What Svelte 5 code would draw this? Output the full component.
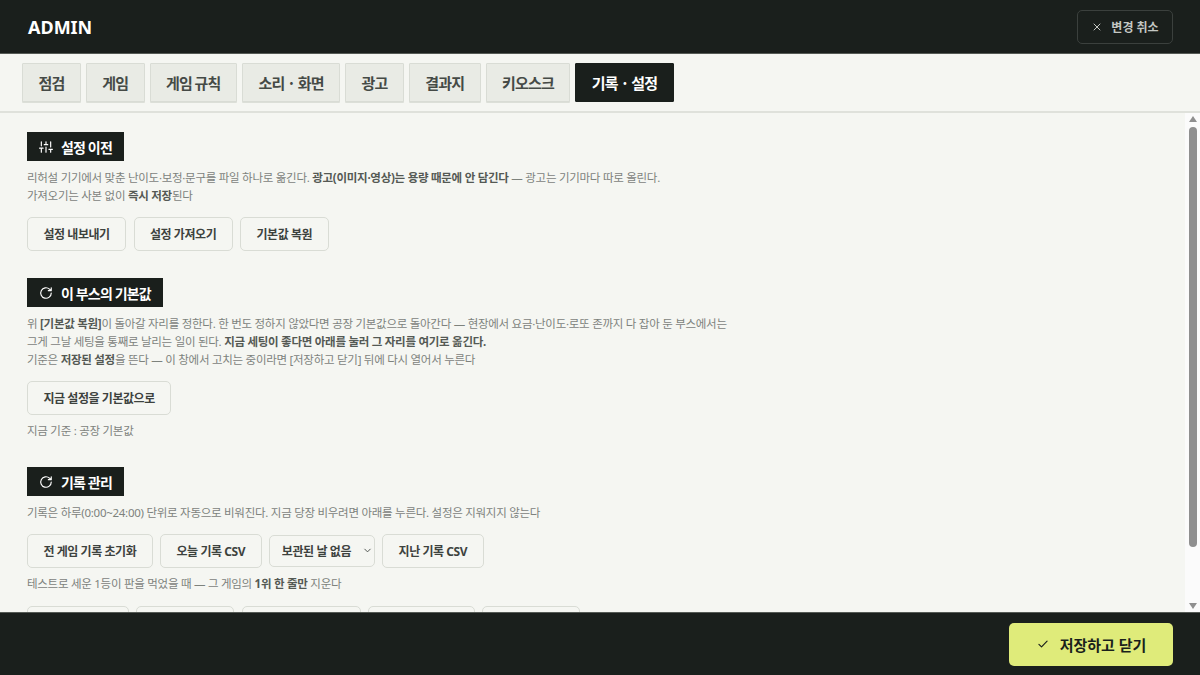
<script>
  const tabs = ["점검", "게임", "게임 규칙", "소리 · 화면", "광고", "결과지", "키오스크", "기록 · 설정"];
  const activeTab = "기록 · 설정";
  const hiddenButtons = [102, 98, 119, 107, 98];
</script>

<div class="admin">
  <header class="top">
    <h1>ADMIN</h1>
    <button class="cancel">
      <svg viewBox="0 0 24 24" class="ico-sm"><path d="M6 6l12 12M18 6L6 18" /></svg>
      변경 취소
    </button>
  </header>

  <nav class="tabs">
    {#each tabs as tab}
      <button class="tab" class:active={tab === activeTab}>{tab}</button>
    {/each}
  </nav>

  <div class="body">
    <main class="content">
      <section>
        <h2>
          <svg viewBox="0 0 24 24" class="ico">
            <path d="M4 21v-7M4 10V3M12 21v-9M12 8V3M20 21v-5M20 12V3M1 14h6M9 8h6M17 16h6" />
          </svg>
          설정 이전
        </h2>
        <p>
          리허설 기기에서 맞춘 난이도·보정·문구를 파일 하나로 옮긴다. <b>광고(이미지·영상)는 용량 때문에 안 담긴다</b> — 광고는 기기마다 따로 올린다.<br />
          가져오기는 사본 없이 <b>즉시 저장</b>된다
        </p>
        <div class="row">
          <button class="btn">설정 내보내기</button>
          <button class="btn">설정 가져오기</button>
          <button class="btn">기본값 복원</button>
        </div>
      </section>

      <section>
        <h2>
          <svg viewBox="0 0 24 24" class="ico">
            <path d="M21 12a9 9 0 1 1-3-6.7L21 8M21 3v5h-5" />
          </svg>
          이 부스의 기본값
        </h2>
        <p>
          위 <b>[기본값 복원]</b>이 돌아갈 자리를 정한다. 한 번도 정하지 않았다면 공장 기본값으로 돌아간다 — 현장에서 요금·난이도·로또 존까지 다 잡아 둔 부스에서는<br />
          그게 그날 세팅을 통째로 날리는 일이 된다. <b>지금 세팅이 좋다면 아래를 눌러 그 자리를 여기로 옮긴다.</b><br />
          기준은 <b>저장된 설정</b>을 뜬다 — 이 창에서 고치는 중이라면 [저장하고 닫기] 뒤에 다시 열어서 누른다
        </p>
        <div class="row">
          <button class="btn">지금 설정을 기본값으로</button>
        </div>
        <p class="note">지금 기준 : 공장 기본값</p>
      </section>

      <section>
        <h2>
          <svg viewBox="0 0 24 24" class="ico">
            <path d="M21 12a9 9 0 1 1-3-6.7L21 8M21 3v5h-5" />
          </svg>
          기록 관리
        </h2>
        <p>기록은 하루(0:00~24:00) 단위로 자동으로 비워진다. 지금 당장 비우려면 아래를 누른다. 설정은 지워지지 않는다</p>
        <div class="row">
          <button class="btn">전 게임 기록 초기화</button>
          <button class="btn">오늘 기록 CSV</button>
          <div class="select-wrap">
            <select disabled>
              <option>보관된 날 없음</option>
            </select>
            <svg viewBox="0 0 24 24" class="chevron"><path d="M6 9l6 6 6-6" /></svg>
          </div>
          <button class="btn">지난 기록 CSV</button>
        </div>
        <p class="note">테스트로 세운 1등이 판을 먹었을 때 — 그 게임의 <b>1위 한 줄만</b> 지운다</p>
        <div class="row clipped">
          {#each hiddenButtons as w}
            <button class="btn" style:width="{w}px" aria-label="기록 삭제"></button>
          {/each}
        </div>
      </section>
    </main>

    <div class="scrollbar">
      <span class="arrow up"></span>
      <span class="thumb"></span>
      <span class="arrow down"></span>
    </div>
  </div>

  <footer class="bottom">
    <button class="save">
      <svg viewBox="0 0 24 24" class="ico"><path d="M5 12.5l4.5 4.5L19 7" /></svg>
      저장하고 닫기
    </button>
  </footer>
</div>

<style>
  :global(body) {
    margin: 0;
    background: #f5f6f2;
  }

  .admin {
    width: 1200px;
    height: 675px;
    display: flex;
    flex-direction: column;
    overflow: hidden;
    font-family: "Noto Sans", "Noto Sans CJK KR", sans-serif;
    color: #1a1f1c;
  }

  button {
    font-family: inherit;
    cursor: pointer;
  }

  svg {
    fill: none;
    stroke: currentColor;
    stroke-linecap: round;
    stroke-linejoin: round;
    stroke-width: 2;
    flex: none;
  }

  .ico {
    width: 14px;
    height: 14px;
  }

  .ico-sm {
    width: 12px;
    height: 12px;
  }

  .top {
    height: 53px;
    flex: none;
    background: #1a1f1c;
    display: flex;
    align-items: center;
    justify-content: space-between;
    padding: 0 27px 0 28px;
    border-bottom: 1px solid #555a55;
  }

  h1 {
    margin: 0;
    font-size: 18px;
    font-weight: 700;
    color: #fff;
  }

  .cancel {
    width: 96px;
    height: 34px;
    display: flex;
    align-items: center;
    justify-content: center;
    gap: 8px;
    background: transparent;
    border: 1px solid #3b403d;
    border-radius: 5px;
    color: #c4c7c3;
    font-size: 12px;
    font-weight: 700;
    padding: 0;
  }

  .tabs {
    flex: none;
    display: flex;
    gap: 5px;
    padding: 9px 22px 9px;
    background: #f5f6f2;
    border-bottom: 2px solid #dfe1db;
  }

  .tab {
    height: 39px;
    padding: 0 15.4px;
    background: #e9ebe5;
    border: 1px solid #d9dcd5;
    border-radius: 1px;
    box-shadow: 0 1px 0 #dcdfd8;
    font-family: "Noto Sans CJK KR", sans-serif;
    font-size: 15px;
    font-weight: 700;
    letter-spacing: -0.8px;
    color: #454a46;
  }

  .tab.active {
    background: #1a1f1c;
    border-color: #1a1f1c;
    box-shadow: none;
    color: #fff;
  }

  .body {
    flex: 1;
    min-height: 0;
    display: flex;
  }

  .content {
    flex: 1;
    min-width: 0;
    overflow: hidden;
    padding: 19px 27px 0;
    display: flex;
    flex-direction: column;
    gap: 27px;
    background: #f5f6f2;
  }

  h2 {
    display: inline-flex;
    align-items: center;
    gap: 8px;
    height: 29px;
    margin: 0;
    padding: 0 12px;
    background: #1a1f1c;
    color: #fff;
    font-size: 14px;
    font-weight: 700;
    letter-spacing: -0.85px;
  }

  p {
    margin: 8px 0 0;
    font-size: 11.5px;
    line-height: 18px;
    letter-spacing: -0.27px;
    color: #7d827d;
  }

  p b {
    color: #545954;
    font-weight: 700;
  }

  .row {
    display: flex;
    align-items: center;
    gap: 7.3px;
    margin-top: 12px;
  }

  .btn {
    height: 34px;
    padding: 0 15.5px;
    background: #f5f6f2;
    border: 1px solid #d9dcd5;
    border-radius: 5px;
    font-size: 12px;
    font-weight: 700;
    letter-spacing: -0.45px;
    color: #3d423e;
  }

  .note {
    margin-top: 7px;
  }

  .select-wrap {
    position: relative;
    display: flex;
  }

  select {
    appearance: none;
    width: 106px;
    height: 32px;
    padding: 0 0 0 12px;
    background: #f5f6f2;
    border: 1px solid #d9dcd5;
    border-radius: 5px;
    font-family: inherit;
    font-size: 12px;
    font-weight: 700;
    letter-spacing: -0.4px;
    color: #3d423e;
    opacity: 1;
  }

  .chevron {
    position: absolute;
    right: 2px;
    top: 10px;
    width: 11px;
    height: 11px;
    color: #454a46;
  }

  .clipped {
    margin-top: 13px;
  }

  .scrollbar {
    flex: none;
    width: 15px;
    display: flex;
    flex-direction: column;
    align-items: center;
    background: #fbfbfb;
    padding: 3px 0;
    gap: 5px;
  }

  .thumb {
    width: 8px;
    flex: none;
    height: 420px;
    background: #8f8f8f;
    border-radius: 4px;
  }

  .arrow {
    width: 0;
    height: 0;
    flex: none;
    border-left: 4px solid transparent;
    border-right: 4px solid transparent;
  }

  .arrow.up {
    border-bottom: 6px solid #8f8f8f;
  }

  .arrow.down {
    margin-top: auto;
    border-top: 6px solid #8f8f8f;
  }

  .bottom {
    flex: none;
    height: 62px;
    background: #1a1f1c;
    border-top: 1px solid #555a55;
    display: flex;
    align-items: center;
    justify-content: flex-end;
    padding: 0 27px;
  }

  .save {
    width: 164px;
    height: 43px;
    display: flex;
    align-items: center;
    justify-content: center;
    gap: 10px;
    background: #dfeb7a;
    border: none;
    border-radius: 5px;
    color: #1a1f1c;
    font-size: 15px;
    font-weight: 700;
    padding: 0;
  }
</style>
